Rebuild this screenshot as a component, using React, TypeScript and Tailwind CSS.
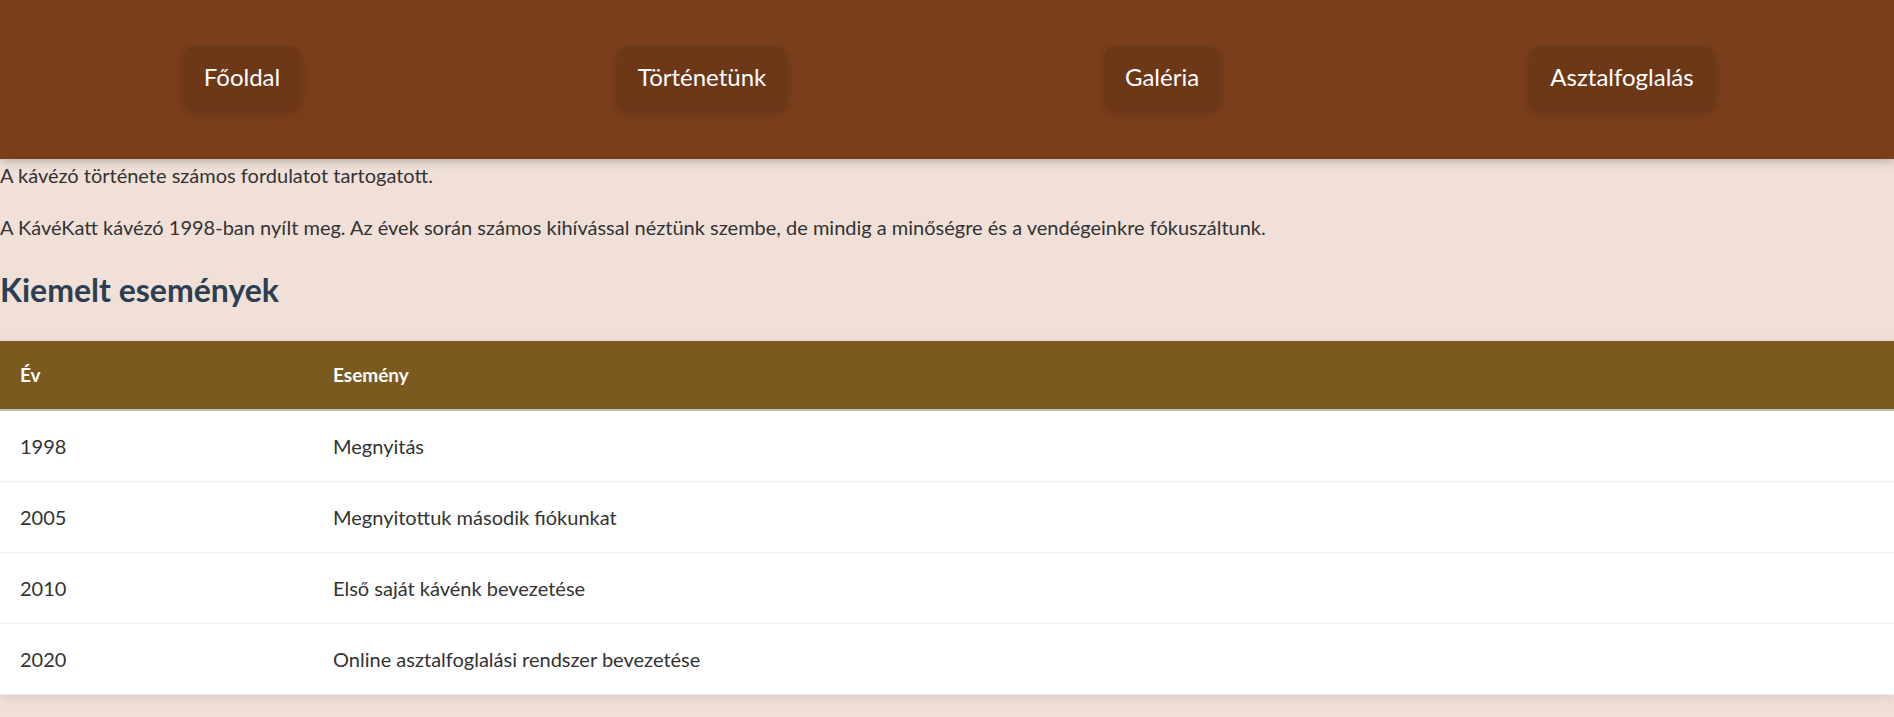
import React from "react";

const links = ["Főoldal", "Történetünk", "Galéria", "Asztalfoglalás"];

const events = [
  { year: "1998", text: "Megnyitás" },
  { year: "2005", text: "Megnyitottuk második fiókunkat" },
  { year: "2010", text: "Első saját kávénk bevezetése" },
  { year: "2020", text: "Online asztalfoglalási rendszer bevezetése" },
];

export default function App() {
  return (
    <div className="min-h-screen bg-[#f0e0d8] text-[#333] font-['Lato',sans-serif] text-[20px] leading-[32px]">
      {/* Header */}
      <header className="relative z-10 h-[159px] bg-[#7a3e1b] pt-[46px] shadow-[0_2px_10px_rgba(0,0,0,0.25)]">
        <nav className="grid grid-cols-4 justify-items-center pl-[12px] pr-[42px]">
          {links.map((l) => (
            <a
              key={l}
              href="#"
              className="rounded-[10px] bg-[#6c3818] px-[20px] py-[12px] text-[24px] leading-[38px] text-white shadow-[0_4px_8px_rgba(0,0,0,0.2)]"
            >
              {l}
            </a>
          ))}
        </nav>
      </header>

      {/* Content */}
      <main>
        <p>A kávézó története számos fordulatot tartogatott.</p>
        <p className="mt-[20px]">
          A KávéKatt kávézó 1998-ban nyílt meg. Az évek során számos kihívással néztünk szembe, de mindig a minőségre és a vendégeinkre fókuszáltunk.
        </p>
        <h2 className="mt-[29px] text-[32px] leading-[36px] font-bold text-[#2c3e50]">Kiemelt események</h2>

        <table className="mt-[33px] w-full border-collapse bg-white shadow-[0_2px_10px_rgba(0,0,0,0.1)]">
          <thead>
            <tr className="bg-[#7a5a1e] border-b-2 border-[#bdbdbd] text-left text-white">
              <th className="w-[313px] h-[69px] px-[20px] font-bold text-[19px]">Év</th>
              <th className="h-[69px] px-[20px] font-bold text-[19px]">Esemény</th>
            </tr>
          </thead>
          <tbody>
            {events.map((e) => (
              <tr key={e.year} className="border-b border-[#eeeeee]">
                <td className="h-[71px] px-[20px]">{e.year}</td>
                <td className="h-[71px] px-[20px]">{e.text}</td>
              </tr>
            ))}
          </tbody>
        </table>
      </main>
    </div>
  );
}
